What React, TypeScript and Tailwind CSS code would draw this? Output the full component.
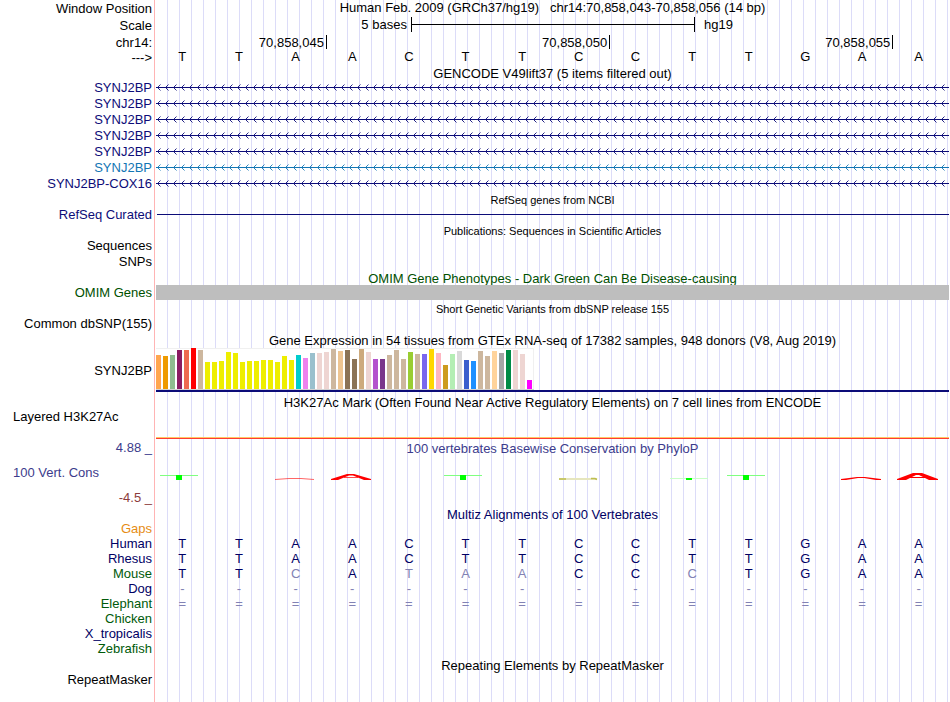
import type { ReactNode } from 'react'
import clsx from 'clsx'

/** One base per column, 14 columns across the window. */
const REFERENCE = 'TTAACTTCCTTGAA'

const NAVY = 'text-[#0c0c78]'
const ALIGN_NAVY = 'text-[#000064]'
const ALIGN_GREEN = 'text-[#005a0a]'

const GENES = [
  { name: 'SYNJ2BP', color: NAVY },
  { name: 'SYNJ2BP', color: NAVY },
  { name: 'SYNJ2BP', color: NAVY },
  { name: 'SYNJ2BP', color: NAVY },
  { name: 'SYNJ2BP', color: NAVY },
  { name: 'SYNJ2BP', color: 'text-[#1276b4]' },
  { name: 'SYNJ2BP-COX16', color: NAVY },
]

const SPECIES = [
  { name: 'Gaps', color: 'text-[#e68c14]' },
  { name: 'Human', color: ALIGN_NAVY, bases: REFERENCE },
  { name: 'Rhesus', color: ALIGN_NAVY, bases: REFERENCE },
  { name: 'Mouse', color: ALIGN_GREEN, bases: 'TTCATAACCCTGAA' },
  { name: 'Dog', color: ALIGN_NAVY, bases: '--------------' },
  { name: 'Elephant', color: ALIGN_GREEN, bases: '==============' },
  { name: 'Chicken', color: ALIGN_GREEN },
  { name: 'X_tropicalis', color: ALIGN_NAVY },
  { name: 'Zebrafish', color: ALIGN_GREEN },
]

// [bar height in px, GTEx tissue color]
const TISSUES: [number, string][] = [
  [34, '#ffa54f'], [33, '#ee9a00'], [34, '#8fbc8f'], [39, '#8b1c62'], [39, '#ee6a50'], [41, '#ff0000'],
  [39, '#cdb79e'], [27, '#eeee00'], [27, '#eeee00'], [28, '#eeee00'], [37, '#eeee00'], [36, '#eeee00'],
  [27, '#eeee00'], [28, '#eeee00'], [28, '#eeee00'], [29, '#eeee00'], [29, '#eeee00'], [27, '#eeee00'],
  [33, '#eeee00'], [29, '#eeee00'], [34, '#00cdcd'], [31, '#ee82ee'], [36, '#9ac0cd'], [36, '#eed5d2'],
  [37, '#eed5d2'], [40, '#cdb79e'], [38, '#eec591'], [39, '#8b7355'], [30, '#8b7355'], [40, '#cdaa7d'],
  [37, '#eed5d2'], [30, '#b452cd'], [30, '#7a378b'], [34, '#cdb79e'], [39, '#cdb79e'], [30, '#cdb79e'],
  [37, '#9acd32'], [35, '#cdb79e'], [35, '#7a67ee'], [40, '#ffd700'], [36, '#ffb6c1'], [24, '#cd9b1d'],
  [35, '#b4eeb4'], [38, '#d9d9d9'], [29, '#3a5fcd'], [28, '#1e90ff'], [38, '#cdb79e'], [33, '#cdb79e'],
  [38, '#ffd39b'], [36, '#a6a6a6'], [39, '#008b45'], [39, '#eed5d2'], [35, '#eed5d2'], [9, '#ff00ff'],
]

interface RowProps {
  label?: ReactNode
  color?: string
  className?: string
  labelClassName?: string
  children?: ReactNode
}

/** Left label cell + track cell with the red divider and blue guide lines. */
function Row({ label, color = 'text-black', className = 'h-[15px]', labelClassName, children }: RowProps) {
  return (
    <div className={clsx('flex', className)}>
      <div className={clsx('w-[154px] shrink-0 whitespace-nowrap pr-0.5 text-right', color, labelClassName)}>
        {label}
      </div>
      <div className="min-w-0 flex-1 border-l border-[#ffb4b4] bg-[repeating-linear-gradient(to_right,transparent_0_11px,#dcdcf8_11px_12px)] bg-clip-content bg-origin-content pl-px">
        {children}
      </div>
    </div>
  )
}

function Title({ children, color, small, clip, label, labelColor }: {
  children: ReactNode
  color?: string
  small?: boolean
  /** Cut descenders at the row edge, for a track that is drawn right below. */
  clip?: boolean
  label?: string
  labelColor?: string
}) {
  return (
    <Row label={label} color={labelColor} className="h-4 leading-[18px]">
      <h2
        className={clsx(
          'h-4 whitespace-pre text-center',
          small ? 'text-[11px]' : 'leading-5',
          clip && 'overflow-hidden',
          color,
        )}
      >
        {children}
      </h2>
    </Row>
  )
}

function Bases({ bases, color = 'text-black' }: { bases: string; color?: string }) {
  return (
    <div className="-ml-0.5 mr-0.5 grid grid-cols-14 text-center">
      {bases.split('').map((base, i) => (
        <span key={i} className={color === 'text-black' || base === REFERENCE[i] ? color : 'text-[#8282b4]'}>
          {base}
        </span>
      ))}
    </div>
  )
}

/** Intron line with strand arrows every 8px, pointing to the reverse strand. */
function GeneLine({ id, color }: { id: string; color: string }) {
  return (
    <svg className={clsx('block h-[15px] w-full', color)} aria-hidden="true">
      <defs>
        <pattern id={id} width="8" height="15" patternUnits="userSpaceOnUse">
          <path d="M4.5 4.5L1.5 7.5L4.5 10.5" fill="none" stroke="currentColor" strokeWidth="0.9" />
        </pattern>
      </defs>
      <rect width="100%" height="15" fill={`url(#${id})`} />
      <rect y="7" width="100%" height="1" fill="currentColor" />
    </svg>
  )
}

function ExpressionChart() {
  return (
    <div className="pt-px">
      <svg className="block" width="378" height="42" role="img" aria-label="Expression by tissue">
        <rect width="378" height="42" fill="#fff" />
        <path d="M0 .5H377.5V41" fill="none" stroke="#f0f0f0" />
        <rect y="41" width="378" height="1" fill="#d2d2d2" />
        {TISSUES.map(([height, fill], i) => (
          <rect key={i} x={i * 7} y={41 - height} width="5" height={height} fill={fill} />
        ))}
      </svg>
      <div className="h-0.5 bg-[#0c0c78]" />
    </div>
  )
}

function ConservationLogo() {
  return (
    <svg className="block h-[50px] w-full" viewBox="0 0 793 50" preserveAspectRatio="none" aria-hidden="true">
      <g fill="#80ff80">
        <rect x="4" y="20" width="38" height="1" />
        <rect x="288" y="20" width="38" height="1" />
        <rect x="571" y="20" width="38" height="1" />
        <rect x="514" y="23" width="38" height="1" fill="#c8ffc8" />
      </g>
      <g fill="#00ff00">
        <rect x="20" y="20" width="6" height="5" />
        <rect x="304" y="20" width="6" height="5" />
        <rect x="587" y="20" width="6" height="5" />
        <rect x="530" y="23" width="6" height="2" />
      </g>
      <g fill="#ff0000">
        <path d="M119 24L133 23H145L158 24V25L145 24H133L119 25Z" opacity="0.6" />
        <path d="M175 24L191 19H198L215 24V25H208L197 20.5H193L182 25H175Z" />
        <path d="M188 22H202V23H188Z" opacity="0.7" />
        <path d="M685 24L701 22H709L725 24V25H720L708 23H702L690 25H685Z" />
        <path d="M741 24L757 18H766L782 24V25H773L763 20H760L750 25H741Z" />
        <path d="M754 22H769V23H754Z" />
      </g>
      <rect x="403" y="23" width="38" height="2" fill="#e6e6be" />
      <path d="M403 24h7M435 23.5h4l2 1" fill="none" stroke="#bebe50" strokeWidth="1.5" />
    </svg>
  )
}

export default function App() {
  return (
    <main className="flex min-h-screen flex-col bg-white pr-px font-['Liberation_Sans',Arial,sans-serif] text-[13px] leading-[15px] text-black">
      <Row label="Window Position" className="h-[17px] leading-[17px]">
        <h1 className="whitespace-pre text-center leading-4">
          {'Human Feb. 2009 (GRCh37/hg19)   chr14:70,858,043-70,858,056 (14 bp)'}
        </h1>
      </Row>
      <Row label="Scale" className="h-[17px] leading-[17px]">
        <div className="grid grid-cols-28">
          <span className="col-span-9 pr-1 text-right leading-4">5 bases</span>
          <div className="-mr-px col-span-10 flex h-[15px] items-center border-x border-black">
            <div className="h-px flex-1 bg-black" />
          </div>
          <span className="col-span-9 pl-2.5 leading-4">hg19</span>
        </div>
      </Row>
      <Row label="chr14:" className="h-[17px] leading-[17px]">
        <div className="grid grid-cols-14 pt-px text-right leading-4">
          <span className="-mr-px col-span-3 h-[14px] border-r border-black pr-0.5">70,858,045</span>
          <span className="-mr-px col-span-5 h-[14px] border-r border-black pr-0.5">70,858,050</span>
          <span className="-mr-px col-span-5 h-[14px] border-r border-black pr-0.5">70,858,055</span>
        </div>
      </Row>
      <Row label="--->" className="h-[13px] leading-[11px]" labelClassName="leading-[13px]">
        <Bases bases={REFERENCE} />
      </Row>

      <Title>GENCODE V49lift37 (5 items filtered out)</Title>
      {GENES.map((gene, i) => (
        <Row
          key={i}
          label={gene.name}
          color={gene.color}
          className={i < GENES.length - 1 ? 'h-4' : 'h-[15px]'}
        >
          <GeneLine id={`strand-${i}`} color={gene.color} />
        </Row>
      ))}

      <Title small>RefSeq genes from NCBI</Title>
      <Row label="RefSeq Curated" color={NAVY}>
        <div className="ml-px pt-[7px]">
          <div className="h-px bg-[#0c0c78]" />
        </div>
      </Row>

      <Title small>Publications: Sequences in Scientific Articles</Title>
      <Row label="Sequences" className="h-4" />
      <Row label="SNPs" />

      <Title clip color="text-[#005000]">
        OMIM Gene Phenotypes - Dark Green Can Be Disease-causing
      </Title>
      <Row label="OMIM Genes" color="text-[#005000]">
        <div className="h-[15px] bg-[#bebebe]" />
      </Row>

      <Title small>Short Genetic Variants from dbSNP release 155</Title>
      <Row label="Common dbSNP(155)" />

      <Title>Gene Expression in 54 tissues from GTEx RNA-seq of 17382 samples, 948 donors (V8, Aug 2019)</Title>
      <Row label="SYNJ2BP" className="h-[46px]" labelClassName="flex items-center justify-end">
        <ExpressionChart />
      </Row>

      <Title>H3K27Ac Mark (Often Found Near Active Regulatory Elements) on 7 cell lines from ENCODE</Title>
      <Row
        label={<p className="pl-[13px] text-left">Layered H3K27Ac</p>}
        className="h-[30px]"
      >
        <div className="flex h-[30px] flex-col justify-end">
          <div className="h-px bg-[#ffc864]" />
          <div className="h-px bg-[#ff3c32]" />
        </div>
      </Row>

      <Title color="text-[#3c3c8c]" label="4.88 _" labelColor="text-[#3c3c8c]">
        100 vertebrates Basewise Conservation by PhyloP
      </Title>
      <Row
        label={
          <>
            <p className="pl-[13px] text-left text-[#3c3c8c]">100 Vert. Cons</p>
            <p className="text-[#8c3c3c]">-4.5 _</p>
          </>
        }
        className="h-[50px]"
        labelClassName="flex flex-col justify-end gap-2.5"
      >
        <ConservationLogo />
      </Row>

      <Title color={ALIGN_NAVY}>Multiz Alignments of 100 Vertebrates</Title>
      {SPECIES.map(({ name, color, bases }) => (
        <Row key={name} label={name} color={color}>
          {bases && <Bases bases={bases} color={ALIGN_NAVY} />}
        </Row>
      ))}

      <Title>Repeating Elements by RepeatMasker</Title>
      <Row label="RepeatMasker" className="flex-1" />
    </main>
  )
}
